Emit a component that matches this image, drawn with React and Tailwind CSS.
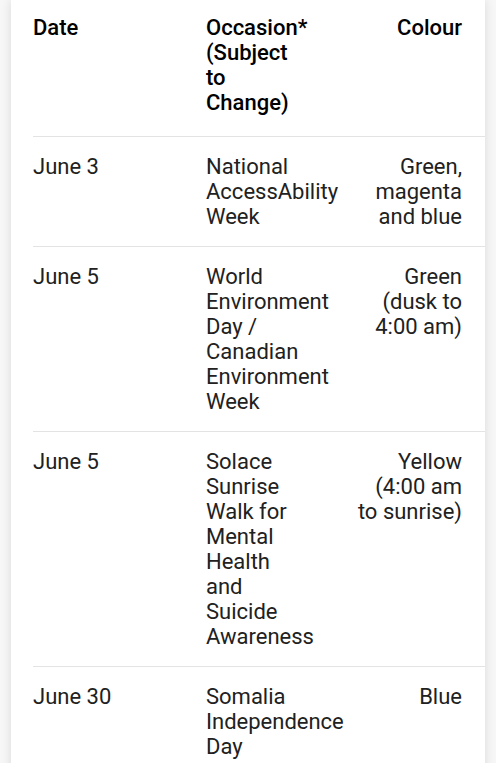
import React from "react";

const rows = [
  { date: "June 3", occasion: ["National", "AccessAbility", "Week"], colour: ["Green,", "magenta", "and blue"] },
  { date: "June 5", occasion: ["World", "Environment", "Day /", "Canadian", "Environment", "Week"], colour: ["Green", "(dusk to", "4:00 am)"] },
  { date: "June 5", occasion: ["Solace", "Sunrise", "Walk for", "Mental", "Health", "and", "Suicide", "Awareness"], colour: ["Yellow", "(4:00 am", "to sunrise)"] },
  { date: "June 30", occasion: ["Somalia", "Independence", "Day"], colour: ["Blue"] },
];

function Lines({ items }) {
  return items.map((t, i) => <div key={i}>{t}</div>);
}

export default function App() {
  return (
    <div className="h-[763px] overflow-hidden bg-[#f7f7f7] font-['Roboto',sans-serif] text-[22px] leading-[25px]">
      <div className="ml-[11px] w-[474px] min-h-full bg-white pl-[22px] shadow-[0_0_10px_rgba(0,0,0,0.12)]">
        {/* header */}
        <div className="grid grid-cols-[173px_1fr_auto] border-b border-[#e3e3e3] pt-[15px] pb-[21px] pr-[23px] font-medium text-black">
          <div>Date</div>
          <div>
            <Lines items={["Occasion*", "(Subject", "to", "Change)"]} />
          </div>
          <div className="text-right">Colour</div>
        </div>
        {rows.map((r, i) => (
          <div
            key={i}
            className="grid grid-cols-[173px_1fr_auto] border-b border-[#e3e3e3] py-[17px] pr-[23px] text-[#212121]"
          >
            <div>{r.date}</div>
            <div>
              <Lines items={r.occasion} />
            </div>
            <div className="text-right">
              <Lines items={r.colour} />
            </div>
          </div>
        ))}
      </div>
    </div>
  );
}
